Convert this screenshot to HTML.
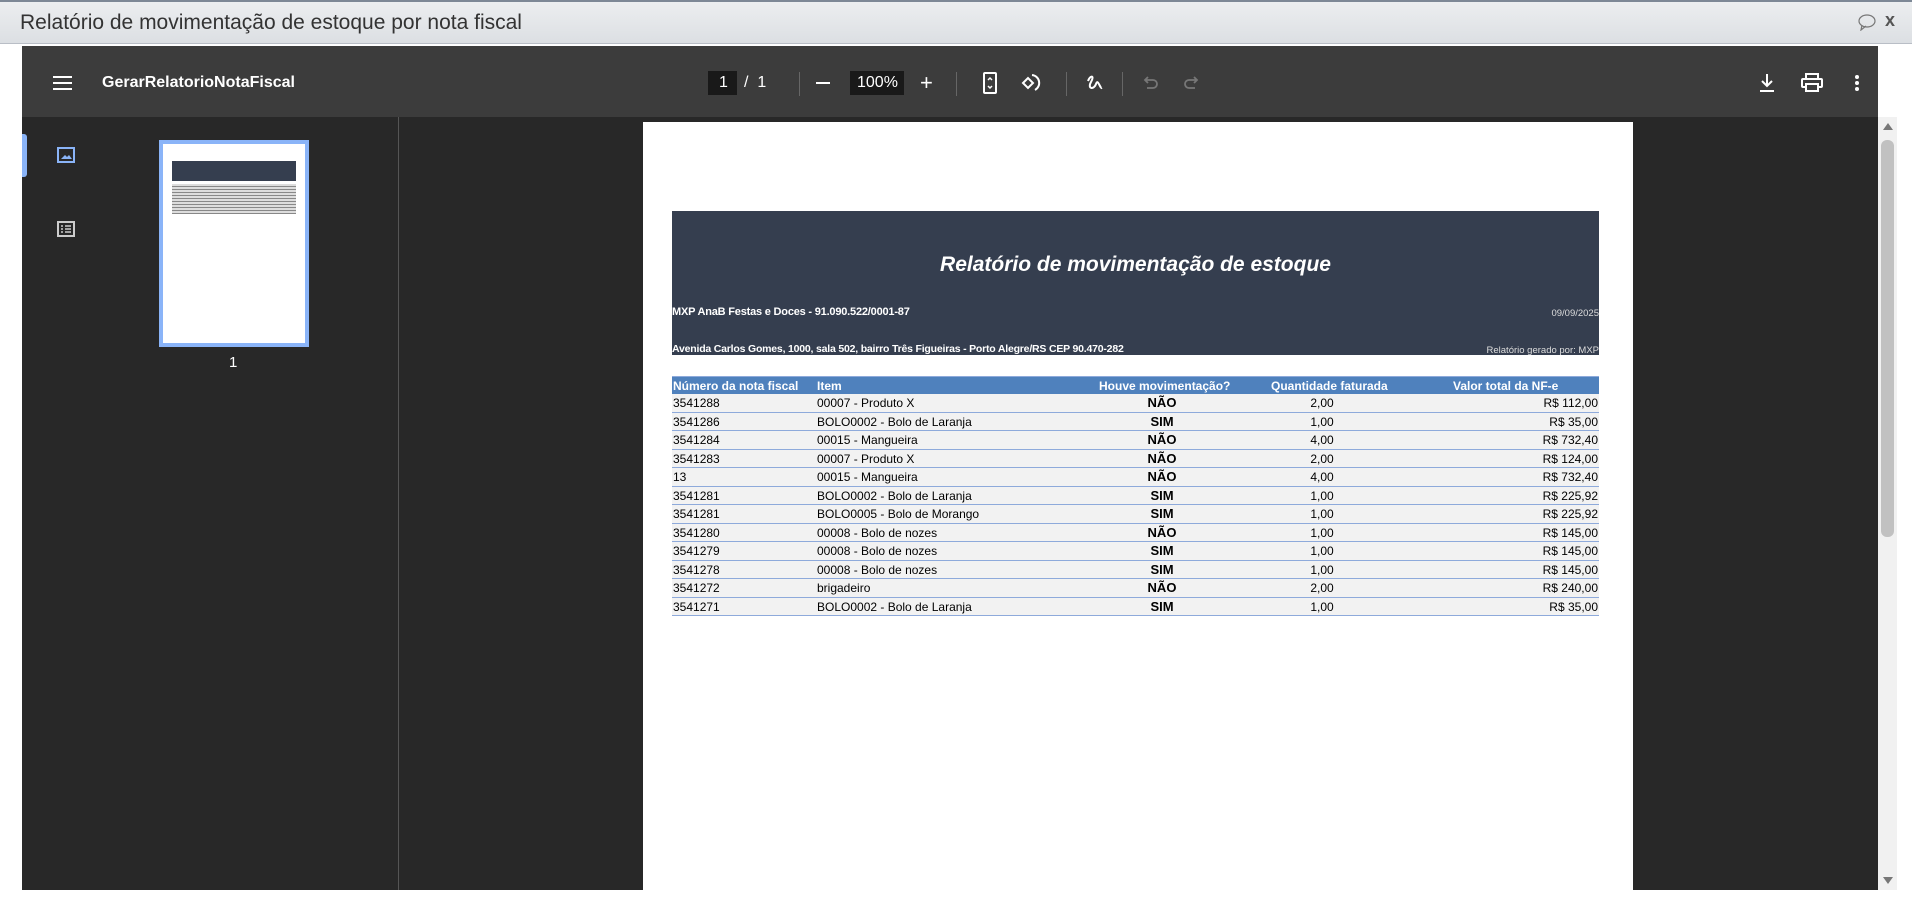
<!DOCTYPE html>
<html><head><meta charset="utf-8"><style>
*{margin:0;padding:0;box-sizing:border-box}
body{width:1912px;height:900px;overflow:hidden;background:#fff;font-family:"Liberation Sans",sans-serif;position:relative}
.abs{position:absolute}
#titlebar{left:0;top:0;width:1912px;height:44px;background:linear-gradient(#eceef0,#dcdfe3);border-top:2px solid #7d8896;border-bottom:1px solid #b9bec6}
#titlebar span{position:absolute;left:20px;top:9px;font-size:21px;color:#333}
#viewer{left:22px;top:46px;width:1856px;height:844px;background:#282828}
#toolbar{left:22px;top:46px;width:1856px;height:71px;background:#3c3c3c;color:#fff}
.tb{position:absolute;color:#fff}
.div{position:absolute;top:72px;width:1px;height:24px;background:#666}
#side{left:22px;top:117px;width:377px;height:773px;background:#282828;border-right:1px solid #555}
#page{left:643px;top:122px;width:990px;height:778px;background:#fff}
.tbl{font-family:"Liberation Sans",sans-serif;font-size:12px;color:#000}
.row{position:absolute;left:672px;width:927px;height:18.5px;background:#f2f2f2;border-bottom:1px solid #8eaadb}
.row div,.hdr div{position:absolute;top:2px;white-space:nowrap}
.hdr{position:absolute;left:672px;top:376px;width:927px;height:18px;background:#4f81bd;color:#fff;border-top:1px solid #8eaadb;font-weight:bold}
</style></head><body>
<div id="titlebar" class="abs"><span>Relatório de movimentação de estoque por nota fiscal</span>
<svg class="abs" style="left:1857px;top:11px" width="20" height="18" viewBox="0 0 20 18"><ellipse cx="10" cy="8" rx="8" ry="6" fill="none" stroke="#777" stroke-width="1.2"/><path d="M5 12 L4 17 L9 13" fill="none" stroke="#777" stroke-width="1.2"/></svg>
<span style="left:1885px;top:8px;font-size:18px;font-weight:bold;color:#555">x</span></div>
<div id="viewer" class="abs"></div>
<div id="toolbar" class="abs"></div>
<svg class="abs" style="left:53px;top:76px" width="20" height="14"><path d="M0 1h19M0 7h19M0 13h19" stroke="#fff" stroke-width="2"/></svg>
<div class="tb" style="left:102px;top:74px;font-size:16px;font-weight:bold">GerarRelatorioNotaFiscal</div>
<div class="tb" style="left:708px;top:71px;width:29px;height:24px;background:#191919"></div>
<div class="tb" style="left:719px;top:74px;font-size:16px">1</div>
<div class="tb" style="left:744px;top:74px;font-size:16px">/&nbsp;&nbsp;1</div>
<div class="div" style="left:799px"></div>
<div class="tb" style="left:816px;top:82px;width:14px;height:2px;background:#fff"></div>
<div class="tb" style="left:850px;top:71px;width:54px;height:24px;background:#191919"></div>
<div class="tb" style="left:857px;top:74px;font-size:16px">100%</div>
<div class="tb" style="left:920px;top:70px;font-size:22px">+</div>
<div class="div" style="left:956px"></div>
<svg class="abs" style="left:982px;top:72px" width="16" height="22"><rect x="2" y="1" width="12" height="20" rx="1" fill="none" stroke="#fff" stroke-width="2"/><path d="M6 8l2-2 2 2M6 14l2 2 2-2" stroke="#fff" stroke-width="1.5" fill="none"/></svg>
<svg class="abs" style="left:1020px;top:72px" width="22" height="22"><path d="M3 11l5-5 5 5-5 5z" fill="none" stroke="#fff" stroke-width="2"/><path d="M12 3a8 8 0 0 1 3 15" fill="none" stroke="#fff" stroke-width="2"/></svg>
<div class="div" style="left:1066px"></div>
<svg class="abs" style="left:1085px;top:73px" width="20" height="20"><path d="M3 8c2-6 7-6 3 1s3 8 5 2 4 5 6 4" fill="none" stroke="#fff" stroke-width="2"/></svg>
<div class="div" style="left:1122px"></div>
<svg class="abs" style="left:1142px;top:75px" width="18" height="16"><path d="M4 5h7a4 4 0 0 1 0 8H5M6 2L3 5l3 3" fill="none" stroke="#777" stroke-width="1.8"/></svg>
<svg class="abs" style="left:1182px;top:75px" width="18" height="16"><path d="M14 5H7a4 4 0 0 0 0 8h6M12 2l3 3-3 3" fill="none" stroke="#777" stroke-width="1.8"/></svg>
<svg class="abs" style="left:1758px;top:73px" width="18" height="20"><path d="M9 1v12M4 8l5 5 5-5M2 18h14" fill="none" stroke="#fff" stroke-width="2"/></svg>
<svg class="abs" style="left:1801px;top:73px" width="22" height="20"><rect x="5" y="1" width="12" height="5" fill="none" stroke="#fff" stroke-width="2"/><rect x="1" y="6" width="20" height="8" rx="1" fill="none" stroke="#fff" stroke-width="2"/><rect x="5" y="11" width="12" height="7" fill="#3c3c3c" stroke="#fff" stroke-width="2"/></svg>
<svg class="abs" style="left:1854px;top:74px" width="6" height="18"><circle cx="3" cy="3" r="2" fill="#fff"/><circle cx="3" cy="9" r="2" fill="#fff"/><circle cx="3" cy="15" r="2" fill="#fff"/></svg>
<div id="side" class="abs"></div>
<div class="abs" style="left:22px;top:134px;width:5px;height:43px;background:#8ab4f8;border-radius:0 3px 3px 0"></div>
<svg class="abs" style="left:57px;top:147px" width="18" height="16"><rect x="1" y="1" width="16" height="14" fill="none" stroke="#8ab4f8" stroke-width="2"/><path d="M4 12l4-4 2 2 2-2 3 4z" fill="#8ab4f8"/></svg>
<svg class="abs" style="left:57px;top:221px" width="18" height="16"><rect x="1" y="1" width="16" height="14" fill="none" stroke="#ccc" stroke-width="2"/><path d="M4 5h2M8 5h6M4 8h2M8 8h6M4 11h2M8 11h6" stroke="#ccc" stroke-width="1.5"/></svg>
<div class="abs" style="left:159px;top:140px;width:150px;height:207px;background:#fff;border:4px solid #8ab4f8">
<div class="abs" style="left:9px;top:17px;width:124px;height:20px;background:#353e4f"></div>
<div class="abs" style="left:9px;top:40px;width:124px;height:30px;background:repeating-linear-gradient(#ddd 0 2px,#888 2px 3px)"></div>
</div>
<div class="abs" style="left:229px;top:354px;color:#fff;font-size:15px">1</div>
<div class="abs" style="left:1878px;top:117px;width:19px;height:773px;background:#f1f1f1"></div>
<div class="abs" style="left:1881px;top:140px;width:13px;height:397px;background:#c1c1c1;border-radius:6px"></div>
<div class="abs" style="left:1883px;top:123px;width:0;height:0;border:5px solid transparent;border-bottom:7px solid #777;border-top:0"></div>
<div class="abs" style="left:1883px;top:877px;width:0;height:0;border:5px solid transparent;border-top:7px solid #777;border-bottom:0"></div>
<div id="page" class="abs"></div>
<div class="abs" style="left:672px;top:211px;width:927px;height:144px;background:#353e4f"></div>
<div class="abs" style="left:672px;top:253px;width:927px;text-align:center;color:#fff;font-size:21px;font-weight:bold;font-style:italic">Relatório de movimentação de estoque</div>
<div class="abs tbl" style="left:672px;top:306px;color:#fff;font-weight:bold;font-size:11px;letter-spacing:-0.2px">MXP AnaB Festas e Doces - 91.090.522/0001-87</div>
<div class="abs tbl" style="left:1500px;top:308px;width:99px;text-align:right;color:#ddd;font-size:9.5px">09/09/2025</div>
<div class="abs tbl" style="left:672px;top:343px;color:#fff;font-weight:bold;font-size:10.5px;letter-spacing:-0.2px">Avenida Carlos Gomes, 1000, sala 502, bairro Três Figueiras - Porto Alegre/RS CEP 90.470-282</div>
<div class="abs tbl" style="left:1450px;top:345px;width:149px;text-align:right;color:#ddd;font-size:9.5px">Relatório gerado por: MXP</div>
<div class="hdr tbl"><div style="left:1px">Número da nota fiscal</div><div style="left:145px">Item</div><div style="left:427px">Houve movimentação?</div><div style="left:599px">Quantidade faturada</div><div style="left:781px">Valor total da NF-e</div></div>
<div class="tbl" id="rows"></div>
<script>
var d=[["3541288","00007 - Produto X","NÃO","2,00","R$ 112,00"],["3541286","BOLO0002 - Bolo de Laranja","SIM","1,00","R$ 35,00"],["3541284","00015 - Mangueira","NÃO","4,00","R$ 732,40"],["3541283","00007 - Produto X","NÃO","2,00","R$ 124,00"],["13","00015 - Mangueira","NÃO","4,00","R$ 732,40"],["3541281","BOLO0002 - Bolo de Laranja","SIM","1,00","R$ 225,92"],["3541281","BOLO0005 - Bolo de Morango","SIM","1,00","R$ 225,92"],["3541280","00008 - Bolo de nozes","NÃO","1,00","R$ 145,00"],["3541279","00008 - Bolo de nozes","SIM","1,00","R$ 145,00"],["3541278","00008 - Bolo de nozes","SIM","1,00","R$ 145,00"],["3541272","brigadeiro","NÃO","2,00","R$ 240,00"],["3541271","BOLO0002 - Bolo de Laranja","SIM","1,00","R$ 35,00"]];
var h="";d.forEach(function(r,i){var t=394+i*18.5;h+='<div class="row" style="top:'+t+'px"><div style="left:1px">'+r[0]+'</div><div style="left:145px">'+r[1]+'</div><div style="left:440px;width:100px;text-align:center;font-weight:bold;font-size:13px;top:1px">'+r[2]+'</div><div style="left:600px;width:100px;text-align:center">'+r[3]+'</div><div style="right:1px">'+r[4]+'</div></div>';});
document.getElementById("rows").innerHTML=h;
</script>
</body></html>
